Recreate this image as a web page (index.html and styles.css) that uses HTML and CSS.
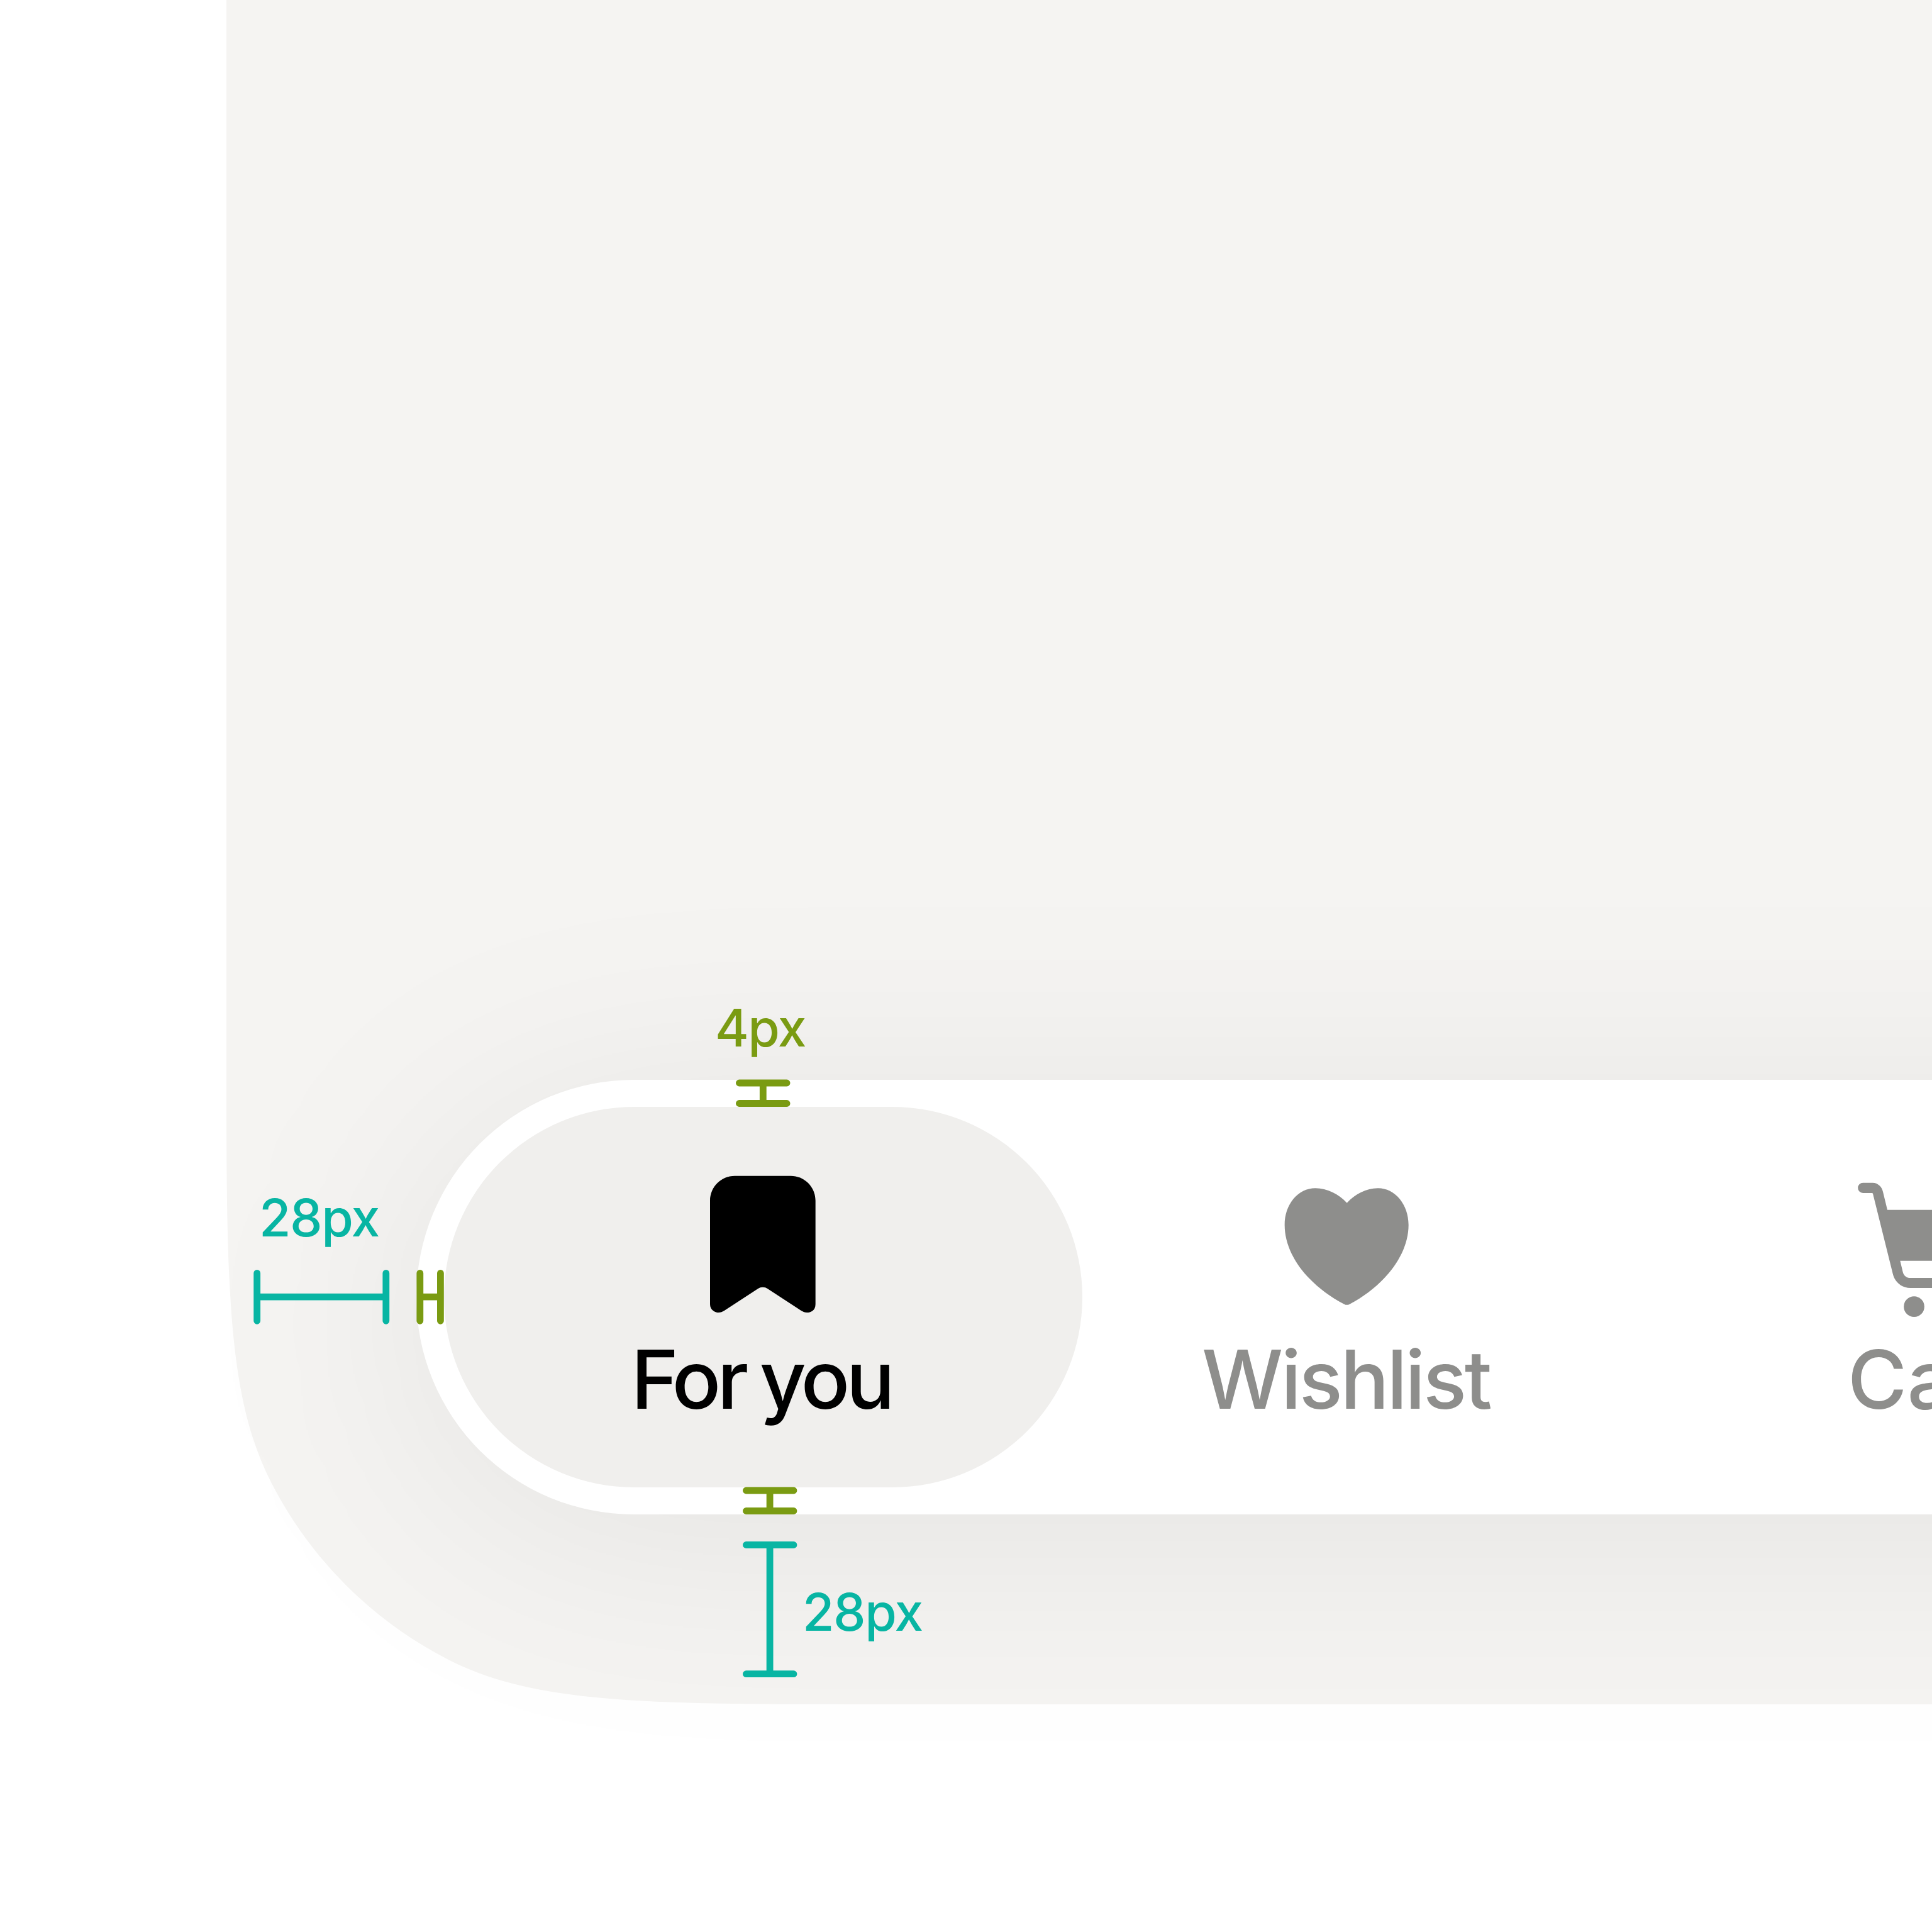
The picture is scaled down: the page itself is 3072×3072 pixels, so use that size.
FILE: index.html
```html
<!DOCTYPE html>
<html lang="en">
<head>
<meta charset="utf-8">
<title>Tab bar spacing</title>
<link rel="stylesheet" href="styles.css">
</head>
<body>
<main class="canvas">
  <section class="screen">
    <nav class="tabbar">
      <a class="tab tab--active">
        <svg class="tab__icon" viewBox="310 24 780 780"><path d="M566 89H833C898 89 951 142 951 207V701C951 732 928 741 910 741C900 741 892 738 884 733L722 627Q713 620.500 699.500 620.500T677 627L515 733C507 738 499 741 489 741C471 741 448 728 448 701V207C448 142 501 89 566 89Z"/></svg>
        <span class="tab__label tab__label--foryou">For you</span>
      </a>
      <a class="tab">
        <svg class="tab__icon" viewBox="397 24 780 780"><path d="M786 218C826 176 878 148 934 148C1016 148 1080 226 1080 323C1080 474 954 620 799 701Q786 708 773 701C615 620 489 474 489 323C489 226 552 148 636 148C692 148 746 176 786 218Z"/></svg>
        <span class="tab__label tab__label--wishlist">Wishlist</span>
      </a>
      <a class="tab">
        <svg class="tab__icon" viewBox="208 24 780 780"><path d="M272 122H318C342 122 363 141 367 165L388 251H947L901 450Q891 494 850 494H449L462 548C466 565 480 576 498 576H840A24 24 0 0 1 840 624H498C457 624 423 596 414 556L319 174Q318 171 315 171H272A24.500 24.500 0 0 1 272 122Z"/><circle cx="515.500" cy="713" r="49"/><circle cx="790" cy="713" r="49"/></svg>
        <span class="tab__label tab__label--cart">Cart</span>
      </a>
    </nav>
  </section>

  <svg class="rulers" viewBox="0 0 3072 3072">
    <g class="ruler ruler--teal">
      <path d="M408.700 2024.400V2100.300M613.800 2024.400V2100.300M1186.400 2456.500H1262M1186.400 2661.700H1262"/>
      <path class="ruler__bar" d="M408.700 2062.200H613.800M1224.100 2456.500V2661.700"/>
    </g>
    <g class="ruler ruler--green">
      <path d="M667.800 2024.400V2100.300M700.400 2024.400V2100.300M1175.400 1722H1251.100M1175.400 1754.500H1251.100M1186.400 2370H1262M1186.400 2402.500H1262"/>
      <path class="ruler__bar" d="M667.800 2062.200H700.400M1213.300 1722V1754.500M1224.100 2370V2402.500"/>
    </g>
  </svg>
  <span class="note note--green note--top">4px</span>
  <span class="note note--teal note--left">28px</span>
  <span class="note note--teal note--bottom">28px</span>
</main>
</body>
</html>
```
FILE: styles.css
```css
* { box-sizing: border-box; }

body {
  margin: 0;
  background: #fff;
  font-family: Inter, "Liberation Sans", sans-serif;
  font-weight: 500;
}

.canvas {
  position: relative;
  width: 3072px;
  height: 3072px;
  padding-left: 360px;
  overflow: hidden;
}

.screen {
  position: relative;
  isolation: isolate;
  display: flex;
  align-items: flex-end;
  width: 2712px;
  height: 2710px;
  padding: 0 0 302px 302.400px;
}

/* Screen corner: 648px radius with 60% corner smoothing */
.screen::before {
  content: "";
  position: absolute;
  inset: 0;
  z-index: -2;
  background: #f5f4f2;
  clip-path: path("M0 0H2712V2710H1036.800C673.900 2710 492.500 2710 353.900 2639.400A648 648 0 0 1 70.600 2356.100C0 2217.500 0 2036.100 0 1673.200Z");
}

.tabbar {
  position: relative;
  display: flex;
  flex: none;
  width: 4000px;
  height: 691.500px;
  padding: 43.200px;
  border-radius: 346px;
  background: #fff;
}

.tabbar::before {
  content: "";
  position: absolute;
  inset: 43px 0 -43px;
  z-index: -1;
  border-radius: 346px;
  background: rgba(0, 0, 0, 0.068);
  filter: blur(180px);
}

.tab {
  display: flex;
  flex: none;
  flex-direction: column;
  align-items: center;
  width: 1015.200px;
  height: 605px;
  padding-top: 88.500px;
  border-radius: 303px;
  color: #8e8e8c;
}

.tab + .tab { margin-left: -86.400px; }

.tab--active {
  background: #f0efed;
  color: #000;
}

.tab__icon {
  flex: none;
  width: 260px;
  height: 260px;
  fill: currentColor;
}

.tab__label {
  margin-top: 7px;
  font-size: 129px;
  line-height: 157px;
  white-space: nowrap;
}

.tab__label--foryou { margin-left: -6px; letter-spacing: -6px; word-spacing: -5px; }
.tab__label--wishlist { margin-left: -4px; letter-spacing: -3.700px; }
.tab__label--cart { margin-left: -2px; letter-spacing: 0; }

.rulers {
  position: absolute;
  inset: 0;
  width: 3072px;
  height: 3072px;
}

.ruler {
  fill: none;
  stroke-width: 10.800px;
  stroke-linecap: round;
}

.ruler__bar { stroke-linecap: butt; }
.ruler--teal { stroke: #08b5a3; }
.ruler--green { stroke: #7a9b12; }

.note {
  position: absolute;
  font-size: 82px;
  line-height: 100px;
  letter-spacing: -1.500px;
  white-space: nowrap;
}

.note--teal { color: #08b5a3; }
.note--green { color: #7a9b12; }
.note--top { left: 1137px; top: 1585px; }
.note--left { left: 412px; top: 1887px; }
.note--bottom { left: 1276px; top: 2514px; }
```
